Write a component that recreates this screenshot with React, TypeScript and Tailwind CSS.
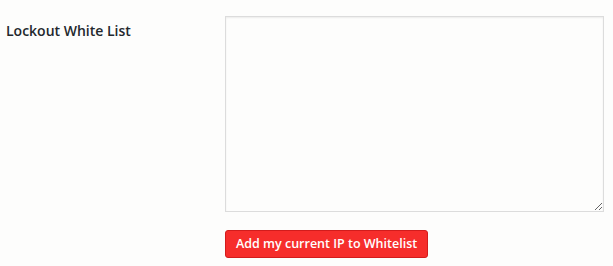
export default function App() {
  return (
    <div className="w-[613px] h-[266px] bg-[#fdfdfc] font-['Open_Sans',sans-serif] text-[#222]">
      <div className="flex pt-4">
        <div className="w-[225px] pl-[6px] pt-[2px]">
          <label className="text-[14px] font-semibold leading-[20px] text-[#23282d]">Lockout White List</label>
        </div>
        <div className="flex flex-col items-start">
          <textarea className="w-[379px] h-[196px] bg-[#fdfdfc] border border-[#dcdcdc] shadow-[inset_0_1px_2px_rgba(0,0,0,0.07)] resize-y outline-none" />
          <button className="mt-[18px] h-[28px] px-[10px] bg-[#f62d2b] border border-[#d21c1c] rounded-[3px] text-white text-[12.5px] font-semibold leading-[26px]">
            Add my current IP to Whitelist
          </button>
        </div>
      </div>
    </div>
  );
}
